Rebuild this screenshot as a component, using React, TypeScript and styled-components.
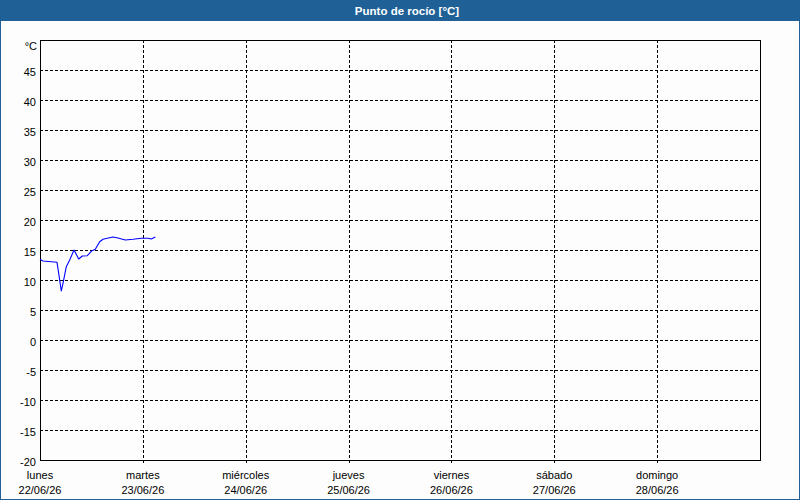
import React from "react";
import styled, { createGlobalStyle } from "styled-components";

// chart geometry in page pixels
const LEFT = 40;
const RIGHT = 760;
const TOP = 40;
const BOTTOM = 460;
const DAY_W = (RIGHT - LEFT) / 7;
const Y_MAX = 50;
const Y_MIN = -20;

const yPos = (v: number) => TOP + ((Y_MAX - v) / (Y_MAX - Y_MIN)) * (BOTTOM - TOP);

const days = [
  { name: "lunes", date: "22/06/26" },
  { name: "martes", date: "23/06/26" },
  { name: "miércoles", date: "24/06/26" },
  { name: "jueves", date: "25/06/26" },
  { name: "viernes", date: "26/06/26" },
  { name: "sábado", date: "27/06/26" },
  { name: "domingo", date: "28/06/26" },
];

const ticks = [45, 40, 35, 30, 25, 20, 15, 10, 5, 0, -5, -10, -15, -20];

const dewPoint: [number, number][] = [
  [40, 259.3],
  [43, 261],
  [51.3, 261.7],
  [57, 262.3],
  [58.7, 273.3],
  [61.3, 291],
  [63, 283.3],
  [66.3, 266.7],
  [69.7, 260],
  [74, 250],
  [78.7, 259],
  [82.3, 256],
  [87.3, 255.7],
  [92, 250.7],
  [95.3, 249.3],
  [99.7, 241.7],
  [103, 239.3],
  [107.3, 238.3],
  [113, 237],
  [118, 238],
  [125.3, 240],
  [133, 239.3],
  [141.3, 238.3],
  [148, 238.3],
  [151.3, 239],
  [155.3, 237],
];

const GlobalStyle = createGlobalStyle`
  html, body {
    margin: 0;
    padding: 0;
    background: #fcfdfc;
  }
`;

const Frame = styled.div`
  width: 800px;
  height: 500px;
  box-sizing: border-box;
  border: 1px solid #1f6196;
  display: flex;
  flex-direction: column;
  background: #fcfdfc;
  font-family: "Liberation Sans", Arial, sans-serif;
`;

const TitleBar = styled.div`
  height: 20px;
  flex-shrink: 0;
  background: #1f6196;
  color: #ffffff;
  font-size: 11.5px;
  font-weight: bold;
  display: flex;
  align-items: center;
  justify-content: center;
  padding-left: 14px;
  padding-bottom: 1px;
  box-sizing: border-box;
`;

const ChartArea = styled.div`
  flex: 1;
  display: flex;
`;

const Chart = styled.svg`
  display: block;
  width: 798px;
  height: 478px;
  font-family: "Liberation Sans", Arial, sans-serif;
  font-size: 11px;
`;

const App = () => {
  return (
    <>
      <GlobalStyle />
      <Frame>
        <TitleBar>Punto de rocío [°C]</TitleBar>
        <ChartArea>
          <Chart viewBox="1 21 798 478">
            {/* horizontal grid */}
            {ticks.slice(0, -1).map((t) => (
              <line
                key={`h${t}`}
                x1={LEFT}
                x2={RIGHT}
                y1={yPos(t) + 0.5}
                y2={yPos(t) + 0.5}
                stroke="#000"
                strokeDasharray="3 2"
                shapeRendering="crispEdges"
              />
            ))}
            {/* vertical grid */}
            {days.slice(1).map((d, i) => {
              const x = Math.round(LEFT + DAY_W * (i + 1)) + 0.5;
              return (
                <line
                  key={d.name}
                  x1={x}
                  x2={x}
                  y1={TOP}
                  y2={BOTTOM + 5}
                  stroke="#000"
                  strokeDasharray="3 2"
                  shapeRendering="crispEdges"
                />
              );
            })}
            {/* frame */}
            <rect
              x={LEFT + 0.5}
              y={TOP + 0.5}
              width={RIGHT - LEFT}
              height={BOTTOM - TOP}
              fill="none"
              stroke="#000"
              shapeRendering="crispEdges"
            />
            {/* y labels */}
            <text x={37} y={50} textAnchor="end" fill="#000">
              °C
            </text>
            {ticks.map((t) => (
              <text key={`l${t}`} x={36} y={yPos(t) + 6} textAnchor="end" fill="#000">
                {t}
              </text>
            ))}
            {/* x labels */}
            {days.map((d, i) => {
              const x = LEFT + DAY_W * i;
              return (
                <g key={`x${d.name}`}>
                  <text x={x} y={479} textAnchor="middle" fill="#000">
                    {d.name}
                  </text>
                  <text x={x} y={494} textAnchor="middle" fill="#000">
                    {d.date}
                  </text>
                </g>
              );
            })}
            {/* data */}
            <polyline
              points={dewPoint.map(([x, y]) => `${x},${y}`).join(" ")}
              fill="none"
              stroke="#0000ff"
              strokeWidth={1.1}
              strokeLinejoin="round"
            />
          </Chart>
        </ChartArea>
      </Frame>
    </>
  );
};

export default App;
